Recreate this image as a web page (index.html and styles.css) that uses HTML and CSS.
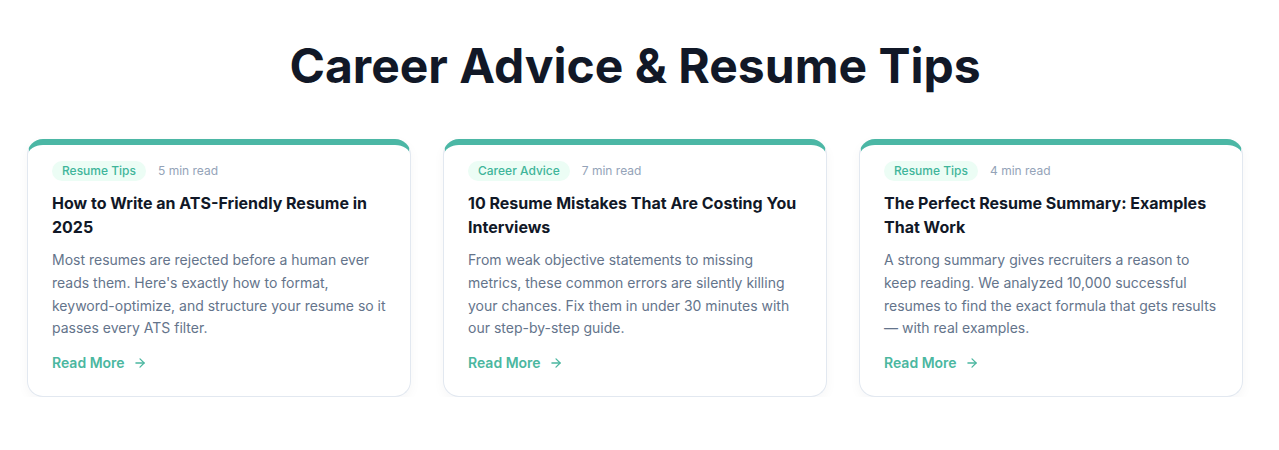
FILE: index.html
```html
<!DOCTYPE html>
<html lang="en">
<head>
<meta charset="utf-8">
<title>Career Advice &amp; Resume Tips</title>
<link rel="stylesheet" href="styles.css">
</head>
<body>
<section class="section">
  <h1 class="heading">Career Advice &amp; Resume Tips</h1>
  <div class="grid">
    <article class="card">
      <div class="meta"><span class="badge">Resume Tips</span><span class="read">5 min read</span></div>
      <h2 class="title">How to Write an ATS-Friendly Resume in 2025</h2>
      <p class="desc">Most resumes are rejected before a human ever reads them. Here's exactly how to format, keyword-optimize, and structure your resume so it passes every ATS filter.</p>
      <a class="more" href="#">Read More <svg class="arrow" viewBox="0 0 24 24" width="14" height="14" fill="none" stroke="currentColor" stroke-width="2.2" stroke-linecap="round" stroke-linejoin="round"><path d="M5 12h14"/><path d="m12 5 7 7-7 7"/></svg></a>
    </article>
    <article class="card">
      <div class="meta"><span class="badge">Career Advice</span><span class="read">7 min read</span></div>
      <h2 class="title">10 Resume Mistakes That Are Costing You Interviews</h2>
      <p class="desc">From weak objective statements to missing metrics, these common errors are silently killing your chances. Fix them in under 30 minutes with our step-by-step guide.</p>
      <a class="more" href="#">Read More <svg class="arrow" viewBox="0 0 24 24" width="14" height="14" fill="none" stroke="currentColor" stroke-width="2.2" stroke-linecap="round" stroke-linejoin="round"><path d="M5 12h14"/><path d="m12 5 7 7-7 7"/></svg></a>
    </article>
    <article class="card">
      <div class="meta"><span class="badge">Resume Tips</span><span class="read">4 min read</span></div>
      <h2 class="title">The Perfect Resume Summary: Examples That Work</h2>
      <p class="desc">A strong summary gives recruiters a reason to keep reading. We analyzed 10,000 successful resumes to find the exact formula that gets results — with real examples.</p>
      <a class="more" href="#">Read More <svg class="arrow" viewBox="0 0 24 24" width="14" height="14" fill="none" stroke="currentColor" stroke-width="2.2" stroke-linecap="round" stroke-linejoin="round"><path d="M5 12h14"/><path d="m12 5 7 7-7 7"/></svg></a>
    </article>
  </div>
</section>
</body>
</html>
```
FILE: styles.css
```css
* { box-sizing: border-box; }
html, body { margin: 0; padding: 0; background: #ffffff; }
body {
  font-family: Inter, "Noto Sans", "Liberation Sans", sans-serif;
  -webkit-font-smoothing: antialiased;
}
.section {
  padding: 42px 36px 0 27px;
}
.heading {
  margin: 0 0 49px;
  text-align: center;
  font-size: 48px;
  line-height: 48px;
  font-weight: 700;
  letter-spacing: 0;
  color: #111827;
}
.grid {
  display: grid;
  grid-template-columns: repeat(3, 1fr);
  gap: 32px;
}
.card {
  background: #ffffff;
  border: 1px solid #e2e8f0;
  border-top: 6px solid #4bb7a5;
  border-radius: 16px;
  padding: 16px 23px 23px 24px;
  box-shadow: 0 4px 12px rgba(15, 23, 42, 0.04);
  display: flex;
  flex-direction: column;
  align-items: flex-start;
}
.meta {
  display: flex;
  align-items: center;
  gap: 12px;
  height: 20px;
}
.badge {
  display: inline-block;
  background: #ecfdf5;
  color: #3fb59a;
  font-size: 12px;
  line-height: 20px;
  font-weight: 500;
  padding: 0 10px;
  border-radius: 999px;
}
.read {
  font-size: 12px;
  line-height: 20px;
  color: #94a3b8;
}
.title {
  margin: 10px 0 0;
  font-size: 16px;
  line-height: 24px;
  font-weight: 700;
  color: #111827;
}
.desc {
  margin: 10px 0 0;
  font-size: 14px;
  line-height: 22.75px;
  color: #64748b;
}
.more {
  margin-top: 13px;
  display: inline-flex;
  align-items: center;
  gap: 8px;
  font-size: 14px;
  line-height: 20px;
  font-weight: 600;
  color: #4bb7a0;
  text-decoration: none;
}
.arrow { display: block; }
```
